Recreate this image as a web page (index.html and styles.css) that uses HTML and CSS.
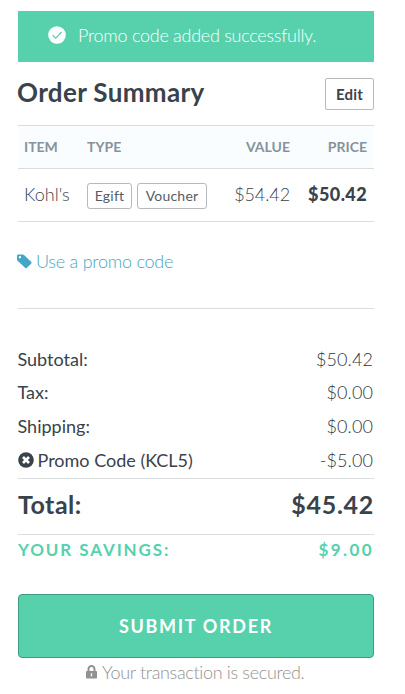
FILE: index.html
```
<!DOCTYPE html>
<html lang="en">
<head>
    <meta charset="UTF-8">
    <meta name="viewport" content="width=device-width, initial-scale=1.0">
    <title>Order Summary</title>
    <link rel="stylesheet" href="styles.css">
</head>
<body>
    <div class="checkout">
        <div class="alert">
            <svg class="alert-icon" viewBox="0 0 18 18">
                <circle cx="9" cy="9" r="8.8" fill="#fff"/>
                <path d="M4.6 9.2l3.1 3L13.6 6" fill="none" stroke="#56d1ac" stroke-width="1.2"/>
            </svg>
            <span class="alert-text">Promo code added successfully.</span>
        </div>

        <div class="heading">
            <h1><span class="heading-text">Order Summary</span></h1>
            <button class="edit">Edit</button>
        </div>

        <table class="items">
            <thead>
                <tr>
                    <th class="col-item">Item</th>
                    <th class="col-type">Type</th>
                    <th class="col-value">Value</th>
                    <th class="col-price">Price</th>
                </tr>
            </thead>
            <tbody>
                <tr>
                    <td class="col-item"><span class="item-name">Kohl's</span></td>
                    <td class="col-type">
                        <div class="tags"><span class="tag tag-egift">Egift</span><span class="tag tag-voucher">Voucher</span></div>
                    </td>
                    <td class="col-value"><span class="item-value">$54.42</span></td>
                    <td class="col-price"><span class="item-price">$50.42</span></td>
                </tr>
            </tbody>
        </table>

        <div class="promo">
            <a class="promo-link">
                <svg class="promo-icon" viewBox="0 0 15 15">
                    <path fill-rule="evenodd" d="M0 1.6Q0 .5 1.1.5H5.6Q6.4.5 7 1.1L14.3 8.1Q15 8.8 14.3 9.5L9.7 14Q9 14.7 8.3 14L.6 6.7Q0 6.1 0 5.4ZM2.9 2a1.2 1.2 0 1 0 .01 0Z" fill="#43a6c6"/>
                </svg>
                <span class="promo-text">Use a promo code</span>
            </a>
        </div>

        <div class="costs">
            <div class="cost"><span class="subtotal">Subtotal:</span><span class="amount">$50.42</span></div>
            <div class="cost"><span class="tax">Tax:</span><span class="amount">$0.00</span></div>
            <div class="cost"><span class="shipping">Shipping:</span><span class="amount">$0.00</span></div>
            <div class="cost">
                <span class="code">
                    <svg class="remove-icon" viewBox="0 0 16 16">
                        <circle cx="8" cy="8" r="7.8" fill="#3a424b"/>
                        <path d="M5 5l6 6M11 5l-6 6" stroke="#fff" stroke-width="2.7"/>
                    </svg>
                    <span class="code-text">Promo Code (KCL5)</span>
                </span>
                <span class="amount">-$5.00</span>
            </div>
        </div>

        <div class="total"><span class="total-label">Total:</span><span class="total-amount">$45.42</span></div>
        <div class="savings"><span class="savings-label">YOUR SAVINGS:</span><span class="savings-amount">$9.00</span></div>

        <button class="submit"><span class="submit-text">SUBMIT ORDER</span></button>

        <div class="secure">
            <svg class="lock-icon" viewBox="0 0 11 14">
                <path d="M2.5 7V4.2a3 3.2 0 0 1 6 0V7" fill="none" stroke="#929292" stroke-width="2"/>
                <rect x="0" y="6" width="11" height="7.6" rx=".8" fill="#929292"/>
                <path d="M5.5 8.3v3" stroke="#fff" stroke-width="1.3"/>
            </svg>
            <span class="secure-text">Your transaction is secured.</span>
        </div>
    </div>
</body>
</html>
```
FILE: styles.css
```
* {
    box-sizing: border-box;
}
body {
    margin: 0;
    background-color: #fff;
    color: #3a424b;
    font-family: Lato, "Liberation Sans", sans-serif;
    font-size: 18px;
    font-variant-ligatures: none;
}
.checkout {
    width: 356px;
    margin: 11px 0 0 18px;
}
span {
    white-space: nowrap;
}
svg {
    display: block;
    flex: none;
}
.alert {
    display: flex;
    align-items: center;
    height: 51px;
    padding: 0 0 4px 30px;
    background-color: #56d1ac;
    color: #fff;
    font-weight: 300;
    letter-spacing: -0.27px;
}
.alert-icon {
    width: 18px;
    height: 18px;
    margin-right: 12px;
}
.heading {
    display: flex;
    justify-content: space-between;
    align-items: flex-start;
    height: 63px;
    padding-top: 16px;
}
h1 {
    margin: -1px 0 0 -1px;
    font-size: 26px;
    line-height: 30px;
    font-weight: 700;
    letter-spacing: 0.35px;
}
.edit {
    width: 49px;
    height: 32px;
    padding: 0 0 1px;
    border: 1px solid #b5babd;
    border-radius: 2px;
    background-color: #fff;
    color: #3a424b;
    font-family: inherit;
    font-size: 15px;
    font-weight: 700;
    letter-spacing: 0.2px;
}
.items {
    width: 100%;
    border-collapse: collapse;
    table-layout: fixed;
}
.items th {
    height: 43px;
    padding: 0 7px 2px 6px;
    border-top: 1px solid #dadddf;
    border-bottom: 1px solid #dadddf;
    background-color: #f9fdff;
    color: #87939b;
    font-size: 14px;
    font-weight: 700;
    text-align: left;
    text-transform: uppercase;
}
.items td {
    height: 53px;
    padding: 0 7px 2px 6px;
    border-bottom: 1px solid #dadddf;
    font-weight: 300;
}
.items .col-item {
    width: 63px;
    padding-right: 0;
}
.items .col-type {
    width: 135px;
}
.items .col-value {
    width: 81px;
    text-align: right;
}
.items .col-price {
    width: 77px;
    padding-left: 0;
    text-align: right;
}
.items .item-value {
    letter-spacing: -0.1px;
}
.items .item-price {
    font-weight: 900;
    letter-spacing: 0.4px;
}
.tags {
    display: flex;
    gap: 5px;
    padding-top: 3px;
}
.tag {
    height: 26px;
    border: 1px solid #b5babd;
    border-radius: 3px;
    color: #555c64;
    font-size: 14px;
    font-weight: 400;
    letter-spacing: 0.2px;
    line-height: 23px;
    text-align: center;
}
.tag-egift {
    flex: 0 0 45px;
}
.tag-voucher {
    flex: 0 0 70px;
}
.promo {
    height: 87px;
    padding-top: 28px;
    border-bottom: 1px solid #dadddf;
}
.promo-link {
    display: flex;
    align-items: center;
    height: 22px;
    margin-left: -1px;
    color: #43a6c6;
    font-weight: 300;
    letter-spacing: -0.25px;
}
.promo-icon {
    width: 15px;
    height: 15px;
    margin-right: 4px;
}
.costs {
    height: 170px;
    padding: 33px 1px 0 0;
    border-bottom: 1px solid #dadddf;
}
.cost {
    display: flex;
    justify-content: space-between;
    align-items: center;
    height: 33.6px;
    margin-left: -0.5px;
}
.amount {
    color: #2f363e;
    font-weight: 300;
    letter-spacing: 0.1px;
}
.code {
    display: flex;
    align-items: center;
}
.remove-icon {
    width: 16px;
    height: 16px;
    margin-right: 4px;
}
.total {
    display: flex;
    justify-content: space-between;
    align-items: center;
    height: 56px;
    padding-bottom: 5px;
    border-bottom: 1px solid #dadddf;
    font-size: 25px;
    font-weight: 700;
    letter-spacing: 0.5px;
}
.total-amount {
    letter-spacing: 0.7px;
}
.savings {
    display: flex;
    justify-content: space-between;
    height: 59px;
    color: #56d1ac;
    font-size: 17px;
    font-weight: 700;
    letter-spacing: 1.9px;
    line-height: 30px;
}
.savings-amount {
    letter-spacing: 2.4px;
}
.submit {
    display: block;
    width: 356px;
    height: 64px;
    padding: 0 0 1px;
    border: 1px solid #419d82;
    border-radius: 4px;
    background-color: #56d1ac;
    color: #fff;
    font-family: inherit;
    font-size: 18px;
    font-weight: 700;
    letter-spacing: 1.7px;
}
.secure {
    display: flex;
    align-items: center;
    height: 28px;
    padding-left: 68px;
    color: #929292;
    font-weight: 300;
    letter-spacing: -0.33px;
}
.lock-icon {
    width: 11px;
    height: 14px;
    margin-right: 5px;
}
```
